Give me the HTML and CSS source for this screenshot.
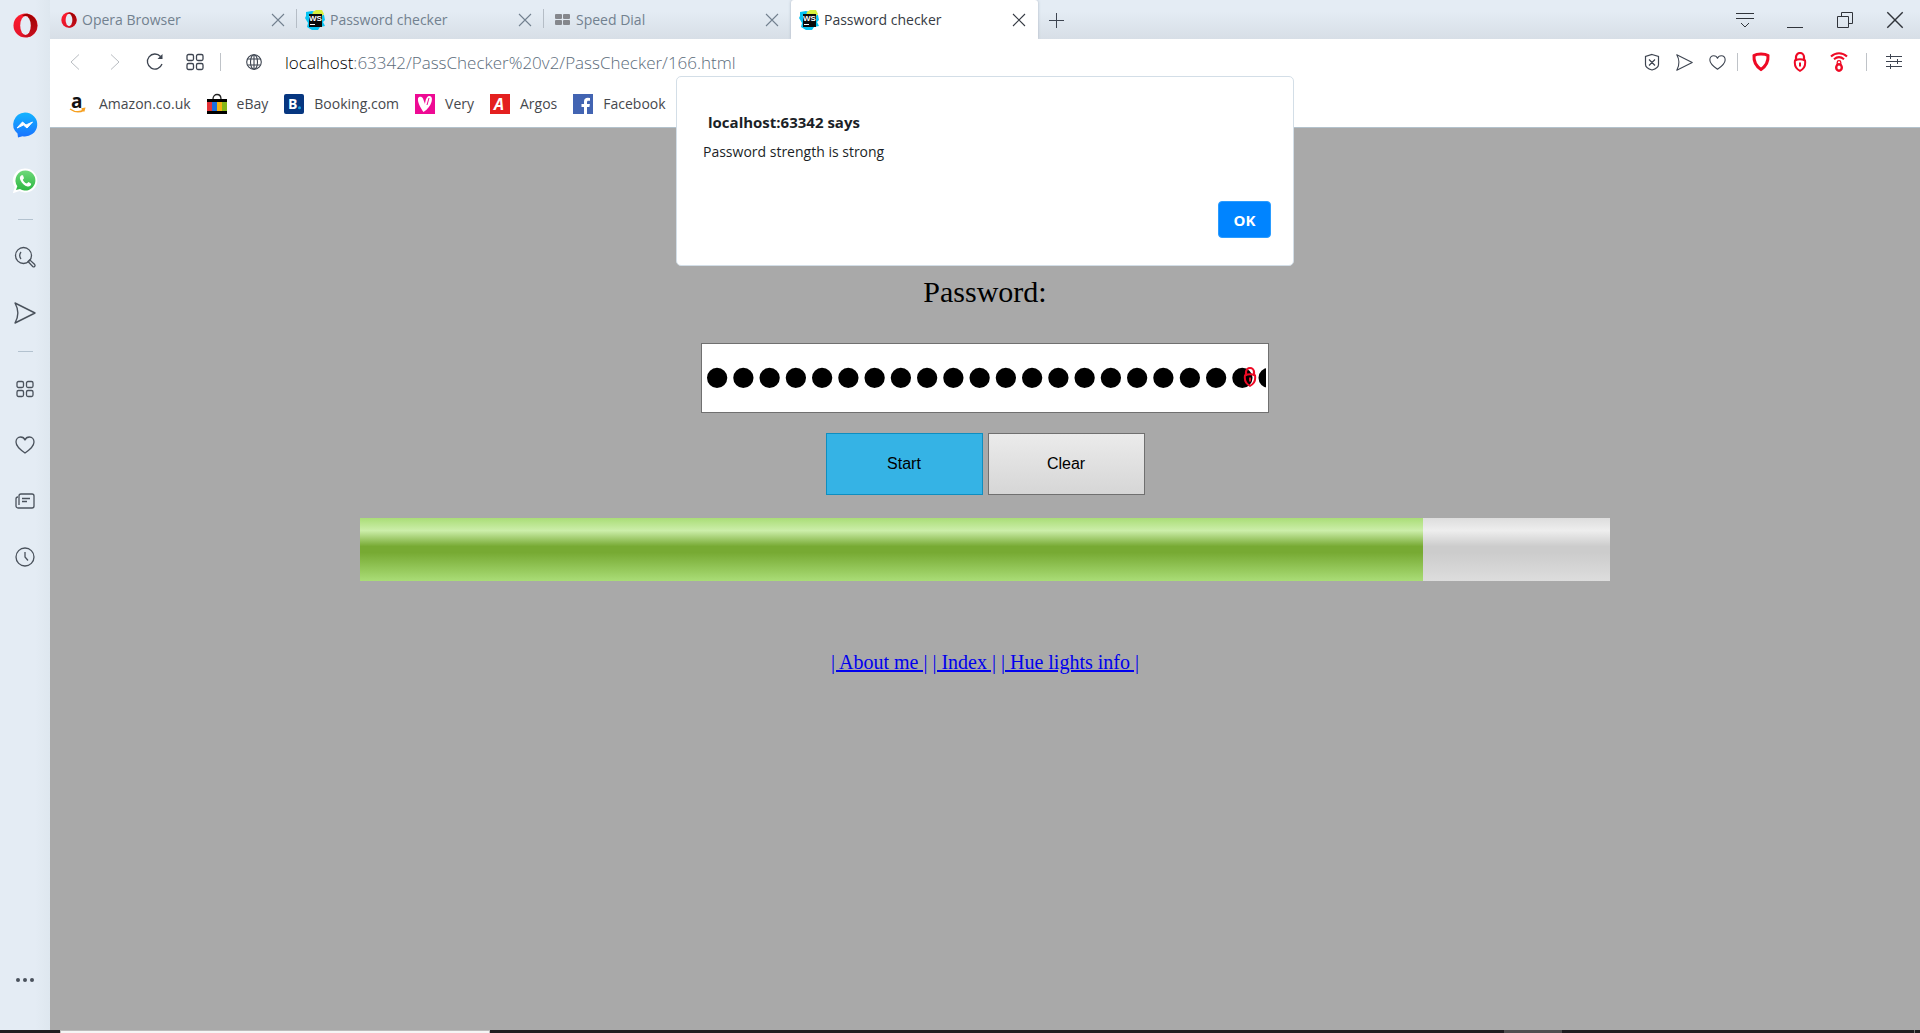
FILE: index.html
```html
<!DOCTYPE html>
<html lang="en">
<head>
<meta charset="utf-8">
<title>Password checker</title>
<link rel="stylesheet" href="styles.css">
</head>
<body>
<svg class="defs" width="0" height="0" aria-hidden="true">
  <defs>
    <linearGradient id="opera-red" x1="0" y1="0" x2="0" y2="1"><stop offset="0" stop-color="#ff1b2d"/><stop offset="1" stop-color="#e3142a"/></linearGradient>
    <linearGradient id="opera-dark" x1="0" y1="0" x2="0" y2="1"><stop offset="0" stop-color="#9c0000"/><stop offset="1" stop-color="#c8101f"/></linearGradient>
    <linearGradient id="msg" x1="0" y1="0" x2="0" y2="1"><stop offset="0" stop-color="#12b4ff"/><stop offset="1" stop-color="#1a72ff"/></linearGradient>
    <linearGradient id="wa" x1="0" y1="0" x2="0" y2="1"><stop offset="0" stop-color="#6fd97a"/><stop offset="1" stop-color="#2db742"/></linearGradient>
    <symbol id="opera" viewBox="0 0 26 26">
      <ellipse cx="13" cy="13" rx="12.5" ry="12.5" fill="url(#opera-red)"/>
      <path d="M15 .7a12.500 12.500 0 0 1 0 24.600c-2 .2-4-.8-5.500-2.300h6V3h-6C11 1.500 13 .5 15 .7z" fill="url(#opera-dark)"/>
      <ellipse cx="13" cy="13" rx="5.500" ry="10" class="hole"/>
    </symbol>
    <symbol id="ws" viewBox="0 0 20 20">
      <path d="M1 2l6-1 4 1 8 3 1 5-2 2 2 4-5 1-2 3H7l-5-3 1-4-3-5 1-2z" fill="#07c3f2"/>
      <path d="M8 2l3-2h6l2 4-3 3-9-2z" fill="#d8f03d"/>
      <rect x="4" y="4" width="13" height="13" fill="#0a0a0a"/>
      <text x="4" y="11" class="ws-text">WS</text>
      <path d="M5 14.500h5" stroke="#fff" stroke-width="1"/>
    </symbol>
    <symbol id="x" viewBox="0 0 14 14"><path d="M1 1l12 12M13 1L1 13" fill="none" stroke="currentColor" stroke-width="1.100"/></symbol>
    <symbol id="grid" viewBox="0 0 18 18"><g fill="none" stroke="currentColor" stroke-width="1.300"><rect x="1" y="1.500" width="6.500" height="6" rx="1.500"/><rect x="10.500" y="1.500" width="6.500" height="6" rx="1.500"/><rect x="1" y="10.500" width="6.500" height="6" rx="1.500"/><rect x="10.500" y="10.500" width="6.500" height="6" rx="1.500"/></g></symbol>
    <symbol id="send" viewBox="0 0 22 22"><path d="M1 1l20 10L1 21c4-7 4-13 0-20z" fill="none" stroke="currentColor" stroke-width="1.400" stroke-linejoin="round"/></symbol>
    <symbol id="heart" viewBox="0 0 20 18"><path d="M10 17C5 13.500 1 10.500 1 6c0-3 2-5 4.500-5C8 1 9.500 2.500 10 4c.5-1.500 2-3 4.500-3C17 1 19 3 19 6c0 4.500-4 7.500-9 11z" fill="none" stroke="currentColor" stroke-width="1.300" stroke-linejoin="round"/></symbol>
    <symbol id="lock" viewBox="0 0 14 20"><path d="M3 8V5a4 4 0 0 1 8 0v3" fill="none" stroke="#ee0a25" stroke-width="2.200"/><path d="M2 8.500c3-1.500 7-1.500 10 0 .8 5-1 8.500-5 10.300C3 17 1.200 13.500 2 8.500z" fill="none" stroke="#ee0a25" stroke-width="2"/><path d="M7 10.500v4" stroke="#ee0a25" stroke-width="2"/></symbol>
  </defs>
</svg>

<div class="browser">
  <aside class="sidebar" aria-label="Sidebar">
    <button class="side opera-menu" aria-label="Menu"><svg width="25" height="25"><use href="#opera"/></svg></button>
    <button class="side" aria-label="Messenger"><svg width="26" height="26" viewBox="0 0 26 26"><path d="M13 .5a12.500 12 0 1 1-2.500 23.800L6 25.500l-.5-4A12.500 12 0 0 1 13 .5z" fill="url(#msg)"/><path d="M5 16l5.500-6 3.500 3 6.500-3-5.500 6-3.500-3z" fill="#fff" stroke="#fff"/></svg></button>
    <button class="side" aria-label="WhatsApp"><svg width="26" height="26" viewBox="0 0 26 26"><path d="M13 .5A12 12 0 1 1 7.500 23L.8 25.200 2.800 19A12 12 0 0 1 13 .5z" fill="#fff"/><path d="M13.500 2.500a10 10 0 1 1-5.500 18.400L4 22l1.300-3.800A10 10 0 0 1 13.500 2.500z" fill="url(#wa)"/><path d="M9.500 7.200c-2 1-2 3-1 5 1.500 3 4 5.500 7 6.300 2 .4 3.500-.6 3.700-2.700L16.500 14l-1.700 1.600c-2-.8-3.300-2.200-4-3.900l1.200-1.500-1-3z" fill="#fff"/></svg></button>
    <hr class="side-rule">
    <button class="side" aria-label="Search"><svg width="22" height="22" viewBox="0 0 22 22" fill="none" stroke="currentColor" stroke-width="1.300"><circle cx="9.500" cy="9.500" r="8"/><path d="M7 6c-1.500 2-1.500 5 0 7M14 15.500l1.700-1.700 5 4.700c1 1.500-.7 3-2 2z"/></svg></button>
    <button class="side" aria-label="My Flow"><svg width="22" height="22"><use href="#send"/></svg></button>
    <hr class="side-rule">
    <button class="side" aria-label="Speed Dial"><svg width="18" height="18"><use href="#grid"/></svg></button>
    <button class="side" aria-label="Bookmarks"><svg width="20" height="18"><use href="#heart"/></svg></button>
    <button class="side" aria-label="News"><svg width="20" height="16" viewBox="0 0 20 16" fill="none" stroke="currentColor" stroke-width="1.300"><path d="M4 12V3a2 2 0 0 1 2-2h11a2 2 0 0 1 2 2v10a2 2 0 0 1-2 2H3a2 2 0 0 1-2-2V6a2 2 0 0 1 2-2M7 5.500h8M7 8.500h5"/></svg></button>
    <button class="side" aria-label="History"><svg width="20" height="20" viewBox="0 0 20 20" fill="none" stroke="currentColor" stroke-width="1.300"><circle cx="10" cy="10" r="9"/><path d="M10 5v5l3 3.500"/></svg></button>
    <button class="side more" aria-label="Sidebar setup"><svg width="18" height="4" viewBox="0 0 18 4" fill="currentColor"><circle cx="2" cy="2" r="2"/><circle cx="9" cy="2" r="2"/><circle cx="16" cy="2" r="2"/></svg></button>
  </aside>

  <div class="window">
    <header>
      <div class="tabstrip">
        <div class="tab"><svg class="fav" width="16" height="16"><use href="#opera"/></svg><span class="tab-title">Opera Browser</span><button class="close" aria-label="Close tab"><svg width="14" height="14"><use href="#x"/></svg></button></div>
        <div class="tab"><svg class="fav" width="20" height="20"><use href="#ws"/></svg><span class="tab-title">Password checker</span><button class="close" aria-label="Close tab"><svg width="14" height="14"><use href="#x"/></svg></button></div>
        <div class="tab"><svg class="fav" width="16" height="12" viewBox="0 0 16 12" fill="#85878c"><rect width="7" height="5" rx="1"/><rect x="8" width="7" height="5" rx="1"/><rect y="6" width="7" height="5" rx="1"/><rect x="8" y="6" width="7" height="5" rx="1"/></svg><span class="tab-title">Speed Dial</span><button class="close" aria-label="Close tab"><svg width="14" height="14"><use href="#x"/></svg></button></div>
        <div class="tab active"><svg class="fav" width="20" height="20"><use href="#ws"/></svg><span class="tab-title">Password checker</span><button class="close" aria-label="Close tab"><svg width="14" height="14"><use href="#x"/></svg></button></div>
        <button class="new-tab" aria-label="New tab"><svg width="16" height="16" viewBox="0 0 16 16" stroke="currentColor"><path d="M8.500 1v15M1 8.500h15"/></svg></button>
        <div class="win-controls">
          <button aria-label="Tab menu"><svg width="18" height="18" viewBox="0 0 18 18" fill="none" stroke="currentColor"><path d="M0 2.500h18M0 7.500h18M5 12l4 4 4-4"/></svg></button>
          <button aria-label="Minimize"><svg width="16" height="16" viewBox="0 0 16 16" stroke="currentColor"><path d="M0 15.500h16"/></svg></button>
          <button aria-label="Restore"><svg width="16" height="16" viewBox="0 0 16 16" fill="none" stroke="currentColor"><path d="M.5 4.500h11v11H.5zM4.500 4V.5h11v11H12"/></svg></button>
          <button aria-label="Close"><svg width="18" height="18"><use href="#x"/></svg></button>
        </div>
      </div>

      <div class="toolbar">
        <button class="tool faint" aria-label="Back"><svg width="10" height="16" viewBox="0 0 10 16" fill="none" stroke="currentColor"><path d="M9 .5L1 8l8 7.500"/></svg></button>
        <button class="tool faint" aria-label="Forward"><svg width="10" height="16" viewBox="0 0 10 16" fill="none" stroke="currentColor"><path d="M1 .5L9 8l-8 7.500"/></svg></button>
        <button class="tool" aria-label="Reload"><svg width="18" height="18" viewBox="0 0 18 18" fill="none" stroke="currentColor" stroke-width="1.300"><path d="M14.500 3.500A7.500 7.500 0 1 0 16 11"/><path d="M16.500 1v5h-5z" fill="currentColor" stroke="none"/></svg></button>
        <button class="tool" aria-label="Speed Dial"><svg width="18" height="18"><use href="#grid"/></svg></button>
        <span class="divider"></span>
        <svg class="globe" width="16" height="16" viewBox="0 0 16 16" fill="none" stroke="currentColor" stroke-width="1.100"><circle cx="8" cy="8" r="7.300"/><ellipse cx="8" cy="8" rx="3.500" ry="7.300"/><path d="M1.500 5h13M1.500 11h13M8 1v14"/></svg>
        <a class="url" href="#"><span class="host">localhost</span>:63342/PassChecker%20v2/PassChecker/166.html</a>
        <div class="tool-right">
          <button aria-label="Ad blocker"><svg width="16" height="18" viewBox="0 0 16 18" fill="none" stroke="currentColor" stroke-width="1.200"><path d="M8 1.500l6.500 2v8c0 2.500-3 4.500-6.500 5.500-3.500-1-6.500-3-6.500-5.500v-8zM5 6.500l6 6M11 6.500l-6 6"/></svg></button>
          <button aria-label="Send to My Flow"><svg width="17" height="17"><use href="#send"/></svg></button>
          <button aria-label="Add bookmark"><svg width="17" height="17"><use href="#heart"/></svg></button>
        </div>
        <span class="divider"></span>
        <div class="extensions">
          <button aria-label="Shield"><svg width="20" height="20" viewBox="0 0 20 20"><path d="M10 2c3 0 5.500.5 7 1.500.5 6-2 10.500-7 14-5-3.500-7.500-8-7-14C4.500 2.500 7 2 10 2z" fill="none" stroke="#ee0a25" stroke-width="3"/></svg></button>
          <button aria-label="Password manager"><svg width="14" height="20"><use href="#lock"/></svg></button>
          <button aria-label="Secure connection"><svg width="18" height="20" viewBox="0 0 18 20" fill="none" stroke="#ee0a25" stroke-width="2"><path d="M1 4.500c4.500-4.500 11.500-4.500 16 0M4 7.200c3-2.500 7-2.500 10 0"/><path d="M7.200 13v-2.500a1.800 1.800 0 0 1 3.600 0V13" stroke-width="1.300"/><ellipse cx="9" cy="15.500" rx="2.800" ry="3.200" stroke-width="2.400"/></svg></button>
        </div>
        <span class="divider"></span>
        <button class="setup" aria-label="Easy setup"><svg width="16" height="16" viewBox="0 0 16 16" stroke="currentColor"><path d="M0 2.500h16M0 7.500h16M0 12.500h16M4.500 0v5M11.500 5v5M4.500 10v5"/></svg></button>
      </div>

      <nav class="bookmarks" aria-label="Bookmarks bar">
        <a href="#"><svg width="20" height="20" viewBox="0 0 20 20"><text x="2" y="14" class="amz-text">a</text><path d="M1 15c5 3.500 10 3.500 14 1M12.500 15l3-.5-.8 3" fill="none" stroke="#f6a021" stroke-width="1.500"/></svg>Amazon.co.uk</a>
        <a href="#"><svg width="20" height="20" viewBox="0 0 20 20"><path d="M6 5c0-6 8-6 8 0" fill="none" stroke="#222" stroke-width="1.300"/><path d="M0 5h20v15H0z" fill="#000"/><path d="M0 8h5v9H0z" fill="#e43137"/><path d="M5 8h5v9H5z" fill="#1a6fe0"/><path d="M10 8h5v9h-5z" fill="#f5b312"/><path d="M15 8h5v9h-5z" fill="#86b817"/></svg>eBay</a>
        <a href="#"><svg width="20" height="20" viewBox="0 0 20 20"><rect width="20" height="20" rx="2" fill="#063680"/><text x="4" y="15" class="bk-text">B</text><circle cx="15.500" cy="13.800" r="1.500" fill="#17a3e0"/></svg>Booking.com</a>
        <a href="#"><svg width="20" height="20" viewBox="0 0 20 20"><path d="M0 0h20v20H0z" fill="#ee0a94"/><path d="M8.500 18C5 13 2.500 8 3 4.500 3.500 2 7 2 8 4.500l2 5.500c.5-4 1.500-7.500 4-8 3-.3 3.500 3 2.500 6-1.300 4-4 7.500-8 10z" fill="#fff"/><path d="M12 11l2-7" stroke="#ee0a94"/></svg>Very</a>
        <a href="#"><svg width="20" height="20" viewBox="0 0 20 20"><path d="M0 0h20v20H0z" fill="#e4201f"/><text x="4" y="16" class="ar-text">A</text></svg>Argos</a>
        <a href="#"><svg width="20" height="20" viewBox="0 0 20 20"><path d="M0 0h20v20H0z" fill="#4264b2"/><path d="M11 20v-7H8.500v-3H11V7.500C11 5 12.500 3.800 14.800 3.800l2.200.1v2.800h-1.500c-1.200 0-1.500.6-1.500 1.500V10h2.900l-.5 3H14v7z" fill="#fff"/></svg>Facebook</a>
      </nav>
    </header>

    <main class="page">
      <form class="checker">
        <label for="pass">Password:</label>
        <div class="field">
          <input id="pass" type="password" value="correcthorsebatterystaple">
          <svg class="field-lock" width="14" height="24"><use href="#lock"/></svg>
        </div>
        <div class="buttons">
          <button type="button" class="btn start">Start</button>
          <button type="button" class="btn clear">Clear</button>
        </div>
        <progress max="100" value="85" aria-label="Password strength"></progress>
      </form>
      <nav class="links"><a href="#">| About me |</a> <a href="#">| Index |</a> <a href="#">| Hue lights info |</a></nav>
    </main>

    <dialog class="alert" open aria-labelledby="alert-title">
      <h2 id="alert-title">localhost:63342 says</h2>
      <p>Password strength is strong</p>
      <button class="ok">OK</button>
    </dialog>
  </div>
</div>
<footer class="taskbar"><span class="task-search"></span><span class="task-app"></span><span class="task-end"></span></footer>
</body>
</html>
```

FILE: styles.css
```css
* { box-sizing: border-box; }
body {
  margin: 0;
  height: 100vh;
  display: flex;
  flex-direction: column;
  overflow: hidden;
  font-family: "Open Sans", "Noto Sans", sans-serif;
  font-size: 14px;
  color: #3d4450;
}
button {
  font: inherit;
  color: inherit;
  background: none;
  border: 0;
  padding: 0;
  display: flex;
  align-items: center;
  justify-content: center;
}
svg { display: block; flex: none; overflow: visible; }
.defs { position: absolute; }
.hole { fill: #e4ecf4; }
.ws-text { font: bold 8px "Liberation Sans", sans-serif; fill: #fff; }
.amz-text { font: bold 19px "Open Sans", sans-serif; fill: #111; }
.bk-text { font: bold 14px "Open Sans", sans-serif; fill: #fff; }
.ar-text { font: italic bold 16px "Open Sans", sans-serif; fill: #fff; }

.browser { flex: 1; display: flex; min-height: 0; }

/* Sidebar */
.sidebar {
  width: 50px;
  flex: none;
  display: flex;
  flex-direction: column;
  align-items: center;
  background: linear-gradient(90deg, #e4ecf4 70%, #dee7ef);
  color: #4a525c;
}
.side { width: 50px; height: 56px; flex: none; }
.opera-menu { height: 50px; margin-bottom: 47px; }
.side-rule {
  width: 15px;
  height: 1px;
  margin: 10px 0 9px;
  border: 0;
  background: #b3c2cf;
  flex: none;
}
.more { margin-top: auto; margin-bottom: 22px; }

/* Window */
.window { flex: 1; min-width: 0; display: flex; flex-direction: column; position: relative; }

.tabstrip {
  height: 39px;
  display: flex;
  background: linear-gradient(#e4ecf4 30%, #d7dee6);
}
.tab {
  width: 247px;
  display: flex;
  align-items: center;
  gap: 5px;
  padding: 0 11px;
  color: #72818f;
  position: relative;
}
.tab:not(.active)::after {
  content: "";
  position: absolute;
  right: 0;
  top: 9px;
  height: 19px;
  border-right: 1px solid #b5bdc6;
}
.tab:nth-child(3)::after { display: none; }
.tab:nth-child(2), .tab.active { padding-left: 8px; }
.tab.active {
  background: #fff;
  color: #363b44;
  border-radius: 3px 3px 0 0;
  box-shadow: 0 0 3px #aab4c0;
  clip-path: inset(0 -4px 0 -4px);
}
.tab-title { flex: 1; white-space: nowrap; }
.close { width: 16px; height: 20px; }
.new-tab { width: 36px; color: #3d4450; }
.win-controls { margin-left: auto; display: flex; color: #30343a; }
.win-controls button { width: 50px; }

.toolbar {
  height: 46px;
  display: flex;
  align-items: center;
  background: #fff;
  padding-left: 5px;
}
.tool { width: 40px; height: 40px; }
.faint { color: #b9bdc2; }
.divider { width: 1px; height: 18px; background: #bfc3c8; }
.tool + .divider { margin-left: 5px; }
.globe { margin: 0 23px 0 25px; }
.url { color: #5c6c7b; text-decoration: none; font-size: 17px; font-weight: 300; }
.host { color: #000; }
.tool-right { margin-left: auto; margin-right: 11px; display: flex; gap: 16px; align-items: center; }
.extensions { margin: 0 18px 0 14px; display: flex; gap: 21px; }
.extensions button { width: 18px; }
.setup { margin: 0 18px 0 19px; }

.bookmarks {
  height: 43px;
  display: flex;
  gap: 16px;
  padding: 0 0 5px 19px;
  align-items: center;
  background: #fff;
  border-bottom: 1px solid #b3c2cc;
}
.bookmarks a {
  display: flex;
  align-items: center;
  gap: 10px;
  color: #46484d;
  text-decoration: none;
}

/* Page */
.page {
  flex: 1;
  background: #a9a9a9;
  color: #000;
  font-family: "Liberation Serif", serif;
  padding-top: 147px;
  text-align: center;
}
.checker { display: flex; flex-direction: column; align-items: center; }
.checker label { font-size: 30px; line-height: 34px; margin-bottom: 34px; }
.field { position: relative; width: 568px; }
.field input {
  display: block;
  width: 100%;
  height: 70px;
  padding: 0 2px 2px;
  border: 1px solid #707070;
  border-radius: 0;
  background: #fff;
  color: #000;
  font: 75px "Liberation Sans", sans-serif;
  outline: 0;
}
.field-lock { position: absolute; right: 12px; top: 22px; }
.buttons { display: flex; gap: 5px; margin: 20px 0 23px; }
.btn {
  width: 157px;
  height: 62px;
  font: 16px "Liberation Sans", sans-serif;
  color: #000;
  border: 1px solid #707070;
}
.start { background: #35b3e5; border-color: #0e8ec0; }
.clear { background: linear-gradient(#ebebeb, #d6d6d6); }
progress {
  appearance: none;
  -webkit-appearance: none;
  display: block;
  width: 1250px;
  max-width: 100%;
  height: 63px;
  border: 0;
}
progress::-webkit-progress-bar { background: linear-gradient(#ddd, #eee 20%, #ccc 45%, #ccc 55%, #ddd); }
progress::-webkit-progress-value { background: linear-gradient(#ad7, #cea 20%, #7a3 45%, #7a3 55%, #ad7); }
.links { margin-top: 69px; font-size: 20px; line-height: 24px; }
.links a { color: #00e; }

/* Alert */
.alert {
  position: absolute;
  top: 76px;
  left: 0;
  right: 0;
  margin: 0 auto;
  width: 618px;
  height: 190px;
  padding: 34px 22px 27px 26px;
  display: flex;
  flex-direction: column;
  border: 1px solid #d3dee7;
  border-radius: 5px;
  background: #fff;
  color: #1b1f27;
}
.alert h2 { margin: 0 0 8px 5px; font-size: 15px; line-height: 22px; }
.alert p { margin: 0; line-height: 22px; }
.ok {
  align-self: flex-end;
  margin-top: auto;
  width: 53px;
  height: 37px;
  border: 1px solid #2a9cff;
  border-radius: 4px;
  background: #0084ff;
  color: #fff;
  font-size: 15px;
  font-weight: 700;
}

/* Taskbar */
.taskbar { height: 3px; flex: none; display: flex; background: #1f1c20; padding: 0 5px 0 60px; }
.task-search { width: 430px; background: #f5f5f5; border: 1px solid #bbb; border-bottom: 0; }
.task-app { width: 58px; margin-left: auto; background: #504e50; }
.task-end { width: 1px; margin-left: 352px; background: #777; }
```
